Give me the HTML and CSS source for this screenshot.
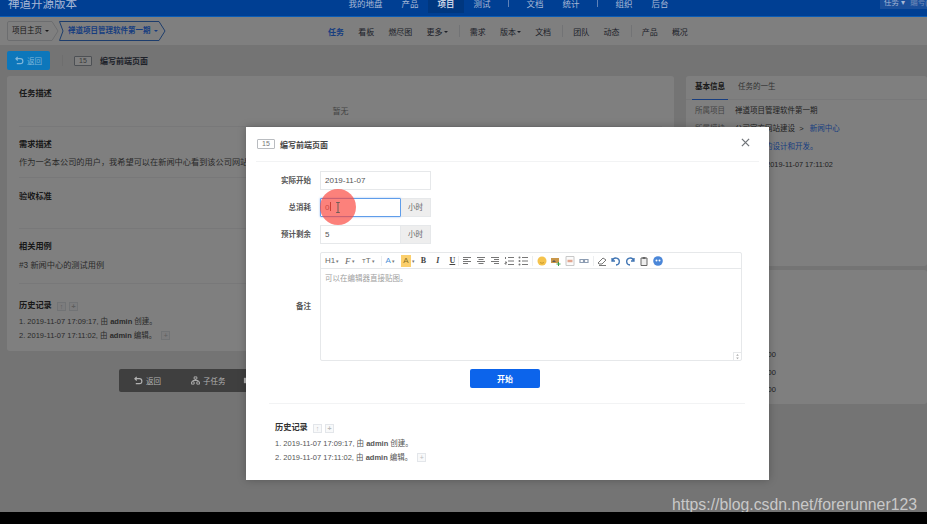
FILE: index.html
```html
<!DOCTYPE html>
<html lang="zh">
<head>
<meta charset="utf-8">
<title>编写前端页面</title>
<link rel="stylesheet" href="styles.css">
</head>
<body>
<div class="screen">
  <header class="nav">
    <div class="brand">禅道开源版本</div>
    <nav class="nav-items">
      <span>我的地盘</span><span>产品</span><span class="on">项目</span><span>测试</span><i></i><span>文档</span><span>统计</span><i></i><span>组织</span><span>后台</span>
    </nav>
    <div class="nav-search">任务 ▾ <em class="search-hint">编号(</em></div>
  </header>
  <div class="subnav">
    <div class="crumbs">
      <span class="crumb"><svg class="crumb-bg" viewBox="0 0 52 20"><path d="M2 .5H45L51 10 45 19.500H2A1.500 1.500 0 0 1 .5 18V2A1.500 1.500 0 0 1 2 .5Z" fill="none" stroke="#d8dade"/></svg>项目主页 <b class="caret"></b></span>
      <span class="crumb2"><svg class="crumb-bg" viewBox="0 0 107 20"><path d="M.5 .5H100L106 10 100 19.500H.5L4 10Z" fill="none" stroke="#3a7ad8"/></svg>禅道项目管理软件第一期 <b class="caret"></b></span>
    </div>
    <div class="menu">
      <span class="active">任务</span><span>看板</span><span>燃尽图</span><span>更多<b class="caret"></b></span><i></i><span>需求</span><span>版本<b class="caret"></b></span><span>文档</span><i></i><span>团队</span><span>动态</span><i></i><span>产品</span><span>概况</span>
    </div>
  </div>
  <div class="toolbar">
    <span class="btn-back"><svg class="ico" viewBox="0 0 10 10"><path d="M3 1 1 3l2 2M1 3h5a2.500 2.500 0 0 1 0 5.500H2" fill="none" stroke="currentColor" stroke-width="1.300"/></svg>返回</span>
    <i class="tool-sep"></i>
    <span class="id-box">15</span>
    <strong class="title">编写前端页面</strong>
  </div>
  <main class="content">
    <section class="card main-card">
      <div class="block b1"><h4>任务描述</h4><p class="none">暂无</p></div>
      <div class="block b2"><h4>需求描述</h4><p>作为一名本公司的用户，我希望可以在新闻中心看到该公司网站发布的新闻，以便了解公司的最新动态。</p></div>
      <div class="block b3"><h4>验收标准</h4></div>
      <div class="block b4"><h4>相关用例</h4><p>#3 新闻中心的测试用例</p></div>
      <div class="hist dim">
        <h4>历史记录 <em class="mini">↑</em><em class="mini">+</em></h4>
        <p>1. 2019-11-07 17:09:17, 由 <b>admin</b> 创建。</p>
        <p>2. 2019-11-07 17:11:02, 由 <b>admin</b> 编辑。 <em class="mini">+</em></p>
      </div>
    </section>
    <aside class="side">
      <section class="card side-card">
        <div class="tabs"><span class="tab-on">基本信息</span><span>任务的一生</span></div>
        <dl class="info">
          <div><dt>所属项目</dt><dd class="link">禅道项目管理软件第一期</dd></div>
          <div><dt>所属模块</dt><dd>公司官方网站建设 &nbsp;&gt;&nbsp;&nbsp; <span class="link">新闻中心</span></dd></div>
          <div><dt>相关需求</dt><dd><span class="link">新闻中心的设计和开发。</span></dd></div>
          <div><dt>最后编辑</dt><dd class="stamp">admin 于 2019-11-07 17:11:02</dd></div>
        </dl>
      </section>
      <section class="card side-card2">
        <dl class="info dates">
          <div><dt>预计开始</dt><dd>0000-00-00</dd></div>
          <div><dt>实际开始</dt><dd>0000-00-00</dd></div>
          <div><dt>截止日期</dt><dd>0000-00-00</dd></div>
        </dl>
      </section>
    </aside>
  </main>
  <div class="actions">
    <span><svg class="ico" viewBox="0 0 10 10"><path d="M3 1 1 3l2 2M1 3h5a2.500 2.500 0 0 1 0 5.500H2" fill="none" stroke="currentColor" stroke-width="1.300"/></svg>返回</span>
    <span><svg class="ico" viewBox="0 0 10 10"><path d="M3.500 1h3v2.500h-3zM.5 6.500h3V9h-3zM6.500 6.500h3V9h-3zM5 3.500V5M2 6.500V5h6v1.500" fill="none" stroke="currentColor"/></svg>子任务</span>
    <span class="act-more"><svg class="ico" viewBox="0 0 10 10"><path d="M1 2h8v6H1z" fill="currentColor"/></svg></span>
  </div>

  <div class="overlay"></div>

  <div class="modal">
    <div class="modal-head">
      <span class="id-box light">15</span>
      <strong class="modal-title">编写前端页面</strong>
      <svg class="close" viewBox="0 0 10 10"><path d="M1 1l8 8M9 1 1 9" stroke="#6f7378" stroke-width="1.400" fill="none"/></svg>
    </div>
    <form class="form">
      <div class="row"><label>实际开始</label><div class="field plain">2019-11-07</div></div>
      <div class="row">
        <label>总消耗</label>
        <div class="group">
          <div class="field focus">0<span class="caret-line"></span></div><span class="addon">小时</span>
        </div>
        <span class="cursor-dot"><svg class="ibeam" viewBox="0 0 6 12"><path d="M1 .5h4M1 11.500h4M3 .5v11" stroke="#5f5a55" fill="none"/></svg></span>
      </div>
      <div class="row"><label>预计剩余</label><div class="group"><div class="field">5</div><span class="addon">小时</span></div></div>
      <div class="row editor-row">
        <label>备注</label>
        <div class="editor">
          <div class="ed-bar">
            <span class="t t1">H1<u>▾</u></span><span class="t t2"><span class="ser-i">F</span><u>▾</u></span><span class="t t3"><small>T</small>T<u>▾</u></span><i></i>
            <span class="t blue">A<u>▾</u></span><span class="t hl">A</span><u class="lone">▾</u>
            <span class="t ser">B</span><span class="t ser em">I</span><span class="t ser un">U</span><i></i>
            <svg class="e" viewBox="0 0 10 10"><path d="M1 1.500h8M1 3.500h5M1 5.500h8M1 7.500h5" stroke="#777"/></svg>
            <svg class="e" viewBox="0 0 10 10"><path d="M1 1.500h8M2.500 3.500h5M1 5.500h8M2.500 7.500h5" stroke="#777"/></svg>
            <svg class="e" viewBox="0 0 10 10"><path d="M1 1.500h8M4 3.500h5M1 5.500h8M4 7.500h5" stroke="#777"/></svg>
            <svg class="e" viewBox="0 0 10 10"><path d="M4 1.500h6M4 5h6M4 8.500h6M1.500 1v2M1 6h1.500v1H1v1h1.500" stroke="#777" fill="none"/></svg>
            <svg class="e" viewBox="0 0 10 10"><path d="M4 1.500h6M4 5h6M4 8.500h6" stroke="#777"/><circle cx="1.500" cy="1.500" r="1" fill="#777"/><circle cx="1.500" cy="5" r="1" fill="#777"/><circle cx="1.500" cy="8.500" r="1" fill="#777"/></svg><i></i>
            <svg class="e" viewBox="0 0 10 10"><circle cx="5" cy="5" r="4.500" fill="#f5c34d"/><path d="M3 6.500q2 1.500 4 0" stroke="#c99a2e" fill="none"/></svg>
            <svg class="e" viewBox="0 0 10 10"><path d="M0 2h8v5H0z" fill="#c9974a"/><path d="M1 6l2-2 2 2z" fill="#555"/><path d="M7.500 6v4M5.500 8h4" stroke="#3c9a4a"/></svg>
            <svg class="e" viewBox="0 0 10 10"><path d="M1 .5h8v9H1z" fill="#fbfbfb" stroke="#c8c8c8"/><path d="M2.500 5h5" stroke="#e3a58f" stroke-width="2.500"/></svg>
            <svg class="e" viewBox="0 0 10 10"><path d="M1 3.500h3.500v3H1zM5.500 3.500H9v3H5.500z" fill="none" stroke="#8c9cb2" stroke-width="1.200"/></svg><i></i>
            <svg class="e" viewBox="0 0 10 10"><path d="M1 7l5-5 3 2-4 4H2zM2 9.500h7" fill="none" stroke="#777"/></svg>
            <svg class="e" viewBox="0 0 10 10"><path d="M1 2v3h3M1.500 4.500A3.500 3.500 0 1 1 5 9" fill="none" stroke="#3f74b3" stroke-width="1.300"/></svg>
            <svg class="e" viewBox="0 0 10 10"><path d="M9 2v3H6M8.500 4.500A3.500 3.500 0 1 0 5 9" fill="none" stroke="#3f74b3" stroke-width="1.300"/></svg>
            <svg class="e" viewBox="0 0 10 10"><path d="M2 2h6v7.500H2z" fill="#eee" stroke="#666"/><path d="M3.500 1h3v2h-3z" fill="#666"/></svg>
            <svg class="e" viewBox="0 0 10 10"><circle cx="5" cy="5" r="4.800" fill="#4a86d8"/><circle cx="3.500" cy="4.500" r="1" fill="#fff"/><circle cx="6.500" cy="4.500" r="1" fill="#fff"/></svg>
          </div>
          <div class="ed-body">可以在编辑器直接贴图。</div>
          <span class="grip"><svg viewBox="0 0 8 8"><path d="M4 1 2.500 3h3zM4 7 2.500 5h3z" fill="#aaa"/></svg></span>
        </div>
      </div>
      <div class="submit-row"><button class="start" type="button">开始</button></div>
    </form>
    <div class="hist modal-hist">
      <h4>历史记录 <em class="mini">↑</em><em class="mini">+</em></h4>
      <p>1. 2019-11-07 17:09:17, 由 <b>admin</b> 创建。</p>
      <p>2. 2019-11-07 17:11:02, 由 <b>admin</b> 编辑。 <em class="mini">+</em></p>
    </div>
  </div>

  <div class="watermark">https://blog.csdn.net/forerunner123</div>
  <div class="blackbar"></div>
</div>
</body>
</html>
```
FILE: styles.css
```css
* { box-sizing: border-box; }
html, body { margin: 0; padding: 0; }
body {
  width: 927px; height: 524px; overflow: hidden;
  font-family: "Liberation Sans", "Noto Sans CJK SC", sans-serif;
  font-size: 8px; color: #3c4353; background: #000;
}
.screen { position: relative; width: 927px; height: 524px; overflow: hidden; background: #e9e9e9; }
em { font-style: normal; }

/* top bar sits above the dim layer, so it carries its final dimmed colours */
.nav {
  position: relative; z-index: 2;
  height: 17px; background: #003f93; border-bottom: 1px solid #0b5cb5;
  display: flex; align-items: flex-start; color: #a8b9d6; overflow: hidden;
}
.brand { font-size: 11.500px; line-height: 16px; margin: -4px 0 0 8px; width: 331px; }
.nav-items { display: flex; align-items: flex-start; font-size: 8.500px; line-height: 8px; flex: 1; }
.nav-items span { padding: 0 9.500px; height: 16px; white-space: nowrap; margin-top: -3px; padding-top: 3px; }
.nav-items .on { background: #00377f; font-weight: 700; color: #c4cfe2; }
.nav-items i { width: 1px; height: 7px; margin: 0 8px; background: #5f82b8; }
.nav-search { width: 47px; height: 9px; background: #1b4f9b; margin-left: auto; font-size: 7.500px; line-height: 5px; padding-left: 4px; white-space: nowrap; overflow: hidden; }
.search-hint { color: #6f8bb8; margin-left: 3px; }

.subnav {
  height: 28px; background: #fff; display: flex; align-items: center;
  padding: 0 0 0 7px;
}
.crumbs { display: flex; align-items: center; width: 321px; }
.crumb, .crumb2 { position: relative; height: 20px; line-height: 20px; white-space: nowrap; font-size: 7.500px; }
.crumb { width: 52px; padding-left: 5px; color: #333; }
.crumb2 { width: 107px; padding-left: 9px; color: #2f7bff; font-weight: 700; }
.crumb-bg { position: absolute; left: 0; top: 0; width: 100%; height: 20px; }
.caret { display: inline-block; border: 2.500px solid transparent; border-top-color: currentColor; border-bottom: 0; vertical-align: middle; margin-left: 1px; }
.menu { display: flex; align-items: center; color: #3c4353; font-size: 8px; white-space: nowrap; }
.menu span { margin-right: 14.200px; }
.menu .active { color: #2f7bff; font-weight: 700; }
.menu i { width: 1px; height: 12px; background: #e4e6ea; margin: 0 10px 0 -3px; }

.toolbar { height: 31px; display: flex; align-items: center; padding: 0 0 0 7px; }
.btn-back {
  position: relative; z-index: 2;
  width: 43px; height: 19px; background: #0d77bb; color: #7fb6da; border-radius: 2px;
  display: flex; align-items: center; justify-content: center; gap: 3px; font-size: 7.500px;
}
.ico { width: 9px; height: 9px; }
.tool-sep { width: 1px; height: 11px; background: #dddddd; margin: 0 11px 0 12px; }
.id-box {
  display: inline-block; width: 18px; height: 10px; border: 1px solid #9aa0a8; border-radius: 1px;
  font-size: 7px; line-height: 8px; text-align: center; color: #777; background: #fff;
}
.title { font-size: 8px; font-weight: 700; margin-left: 8px; }

.content { display: flex; gap: 12px; padding: 0 0 0 7px; }
.card { background: #fff; border-radius: 3px; }
.main-card { width: 667px; height: 275px; padding: 1px 12px 0; flex: none; overflow: hidden; }
.block { border-bottom: 1px solid #f0f1f2; }
.block h4, .hist h4 { margin: 0; font-size: 8.200px; font-weight: 700; color: #333; line-height: 12px; }
.block p { margin: 6px 0 0; color: #555; font-size: 8.200px; line-height: 12px; white-space: nowrap; }
.b1 { height: 50px; padding-top: 11px; }
.b1 .none { text-align: center; margin-top: 6px; color: #888; font-size: 8px; }
.b2 { height: 51px; padding-top: 12px; }
.b3 { height: 51px; padding-top: 13px; }
.b4 { height: 55px; padding-top: 12px; }
.b4 p { margin-top: 7px; }
.hist p { margin: 0; line-height: 13.500px; height: 13.500px; color: #555; font-size: 7.500px; white-space: nowrap; }
.hist b { font-weight: 700; }
.dim { padding-top: 16px; }
.dim h4 { margin-bottom: 3px; }
.mini {
  display: inline-block; width: 9px; height: 9px; border: 1px solid #e3e6ea; margin-left: 3px;
  font-size: 7px; line-height: 7px; text-align: center; color: #bbb; vertical-align: top; margin-top: 2px; background: #f8f9fa;
}
.side { flex: 1; display: flex; flex-direction: column; gap: 4px; }
.side-card { height: 190px; }
.side-card2 { height: 134px; }
.tabs { display: flex; height: 24px; border-bottom: 1px solid #f0f1f2; font-size: 7.500px; padding-left: 6px; color: #666; white-space: nowrap; }
.tabs span { line-height: 22px; margin-right: 10px; }
.tabs .tab-on { font-weight: 700; color: #333; border-bottom: 1px solid #2f7bff; height: 24px; padding: 0 3px; }
.info { margin: 2px 0 0; padding-left: 9px; }
.info div { display: flex; height: 18px; line-height: 18px; font-size: 7.500px; white-space: nowrap; }
.info dt { width: 40px; color: #888; flex: none; }
.info dd { margin: 0; color: #444; }
.info .stamp { font-size: 7.300px; }
.dates { margin: 0; padding-top: 76px; }
.dates div { height: 17.500px; line-height: 17.500px; }
.dates dd { margin-left: 2.500px; }
.link { color: #2f7bff; }
.actions {
  position: absolute; z-index: 2; left: 119px; top: 369px; width: 160px; height: 22.500px;
  background: #3f3f3f; border-radius: 2px; display: flex; align-items: center; padding-left: 15px; gap: 30px; color: #b2b2b2; font-size: 7.500px;
}
.actions span { display: flex; align-items: center; gap: 3px; }
.actions .act-more { margin-left: -13px; }

/* dim layer */
.overlay { position: absolute; inset: 0 0 12px 0; background: rgba(0,0,0,.5); }

/* modal */
.modal {
  position: absolute; z-index: 3; left: 246px; top: 127px; width: 523px; height: 353px;
  background: #fff; box-shadow: 0 0 8px rgba(0,0,0,.25);
}
.modal-head {
  height: 35px; margin: 0 10px; display: flex; align-items: center;
  padding: 0 0 0 1px; border-bottom: 1px solid #f2f3f4;
}
.id-box.light { border-color: #b9bcc0; }
.modal-title { margin-left: 5px; font-size: 8px; font-weight: 700; color: #444; }
.close { width: 9px; height: 9px; margin: -3px 9px 0 auto; }
.form { padding: 9px 0 0; }
.row { display: flex; align-items: flex-start; position: relative; height: 27px; }
.row label { width: 65px; text-align: right; font-size: 7.500px; font-weight: 700; color: #555; line-height: 19px; flex: none; margin-right: 9px; }
.field {
  height: 19px; width: 111px; border: 1px solid #e6e8ea; background: #fff; font-size: 8px;
  line-height: 17px; padding-left: 4px; color: #555;
}
.group { display: flex; width: 111px; }
.group .field { width: 81px; }
.addon { width: 30px; height: 19px; background: #eeeeee; border: 1px solid #e6e8ea; border-left: 0; text-align: center; line-height: 17px; color: #666; font-size: 7.500px; }
.focus { border-color: #5f9dea; box-shadow: 0 0 2px rgba(60,130,230,.6); border-radius: 1px; }
.caret-line { display: inline-block; width: 1px; height: 9px; background: #6a3a30; vertical-align: -1px; margin-left: 1px; }
.cursor-dot {
  position: absolute; left: 74px; top: -9px; width: 36px; height: 36px; border-radius: 50%;
  background: rgba(250,70,60,.68); display: flex; align-items: center; justify-content: center;
}
.ibeam { width: 6px; height: 11px; }
.editor-row { height: 109px; align-items: center; }
.editor { position: relative; width: 422px; height: 109px; border: 1px solid #e6e8ea; border-radius: 2px; }
.ed-bar { height: 16px; display: flex; align-items: center; padding-left: 4px; border-bottom: 1px solid #e6e8ea; color: #666; font-size: 8px; white-space: nowrap; }
.ed-bar i { width: 1px; height: 10px; background: #eceef0; margin: 0 3.500px 0 0; flex: none; }
.ed-bar u, .lone { text-decoration: none; font-size: 5px; color: #777; }
.t { display: inline-flex; align-items: center; height: 12px; margin-right: 5px; }
.t u { margin-left: 1px; }
.t1 { width: 15px; margin-right: 5px; }
.t2 { width: 11px; margin-right: 6px; }
.t3 { width: 14px; margin-right: 5px; }
.t3 small { font-size: 6px; }
.ser-i { font-family: "Liberation Serif", serif; font-style: italic; font-size: 9px; }
.blue { color: #4a90d9; }
.hl { background: #fbcf6c; width: 10px; justify-content: center; margin: 0 1px 0 1px; color: #8a7020; }
.lone { margin-right: 5px; }
.ser { font-family: "Liberation Serif", serif; font-weight: 700; width: 7px; margin-right: 7.500px; justify-content: center; color: #444; }
.em { font-style: italic; }
.un { text-decoration: underline; }
.ser.un { margin-right: 2px; }
.e { width: 10px; height: 10px; margin-right: 4px; flex: none; }
.ed-body { padding: 4px; font-size: 7.500px; line-height: 11px; color: #a0a0a0; }
.grip { position: absolute; right: 0; bottom: 0; width: 8px; height: 8px; border-top: 1px solid #e6e8ea; border-left: 1px solid #e6e8ea; display: flex; }
.grip svg { width: 100%; height: 100%; }
.submit-row { display: flex; padding-left: 224px; margin-top: 8px; }
.start {
  width: 70px; height: 19px; border: 0; border-radius: 2px; padding: 0;
  background: #0c64eb; color: #fff; font: 700 8px "Liberation Sans", "Noto Sans CJK SC", sans-serif;
}
.modal-hist { margin: 15px 0 0 23px; padding: 18px 6px 0; border-top: 1px solid #f2f3f4; width: 476px; }
.modal-hist h4 { margin-bottom: 3px; }

.watermark {
  position: absolute; z-index: 3; left: 672px; top: 496px; font-size: 15.800px; line-height: 18px; color: #c9c9c9;
  font-family: "Liberation Sans", sans-serif; white-space: nowrap;
}
.blackbar { position: absolute; z-index: 4; left: 0; right: 0; top: 512px; height: 12px; background: #000; }
```
